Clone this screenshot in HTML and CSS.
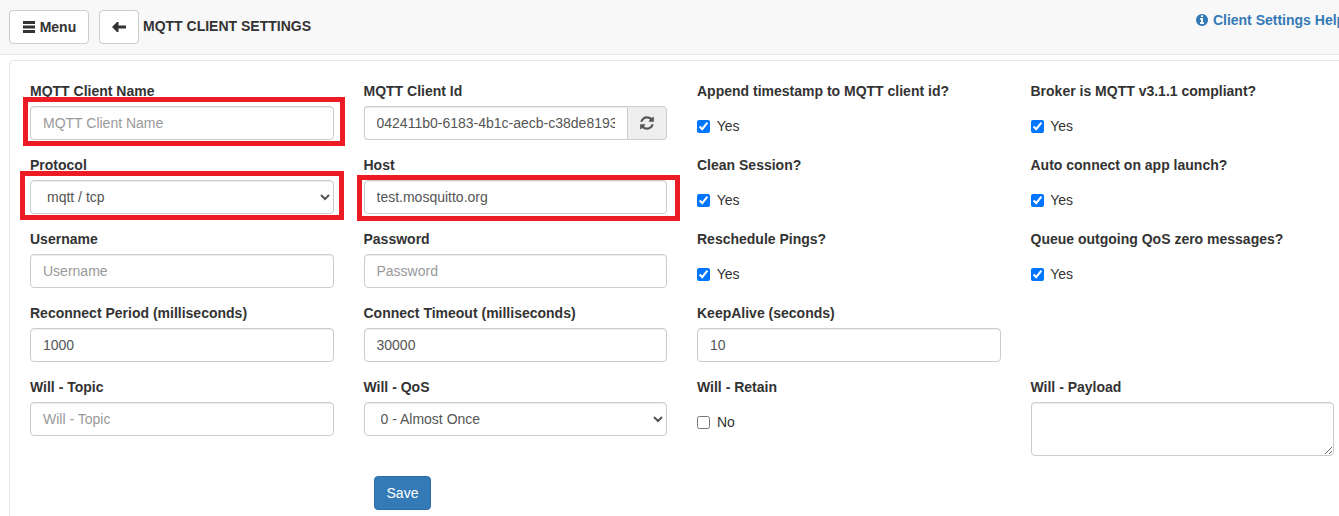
FILE: index.html
```html
<!DOCTYPE html>
<html>

<head>
  <meta charset="utf-8">
  <link rel="stylesheet" href="styles.css">
  <title>MQTT Client Settings</title>
</head>

<body>
  <div class="navbar">
    <button type="button" class="btn btn-menu">
      <svg class="icon" viewBox="0 0 14 14"><path d="M1 1h12v3h-12zM1 5.5h12v3h-12zM1 10h12v3h-12z"/></svg>
      Menu
    </button>
    <button type="button" class="btn btn-back">
      <svg class="icon" viewBox="0 0 14 10"><path d="M0 5l5-5h1.5v3.4h7.5v3.2h-7.5v3.4h-1.5z"/></svg>
    </button>
    <span class="page-title">MQTT CLIENT SETTINGS</span>
    <a class="help-link" href="#">
      <svg class="icon" viewBox="0 0 1792 1792"><path d="M1152 1376v-160q0-14-9-23t-23-9h-96v-512q0-14-9-23t-23-9h-320q-14 0-23 9t-9 23v160q0 14 9 23t23 9h96v320h-96q-14 0-23 9t-9 23v160q0 14 9 23t23 9h448q14 0 23-9t9-23zm-128-896v-160q0-14-9-23t-23-9h-192q-14 0-23 9t-9 23v160q0 14 9 23t23 9h192q14 0 23-9t9-23zm640 416q0 209-103 385.5t-279.5 279.5-385.5 103-385.5-103-279.5-279.5-103-385.5 103-385.5 279.5-279.5 385.5-103 385.5 103 279.5 279.5 103 385.5z"/></svg>
      Client Settings Help
    </a>
  </div>

  <div class="panel">
    <form class="settings">
      <div class="form-group marked marked-name">
        <label>MQTT Client Name</label>
        <input class="form-control" type="text" placeholder="MQTT Client Name">
      </div>
      <div class="form-group">
        <label>MQTT Client Id</label>
        <div class="input-group">
          <input class="form-control" type="text" value="042411b0-6183-4b1c-aecb-c38de8193a4f">
          <span class="addon">
            <svg class="icon" viewBox="0 0 1792 1792"><path d="M1639 1056q0 5-1 7-64 268-268 434.5t-478 166.5q-146 0-282.5-55t-243.5-157l-129 129q-19 19-45 19t-45-19-19-45v-448q0-26 19-45t45-19h448q26 0 45 19t19 45-19 45l-137 137q71 66 161 102t187 36q134 0 250-65t186-179q11-17 53-117 8-23 30-23h192q13 0 22.5 9.5t9.5 22.5zm25-800v448q0 26-19 45t-45 19h-448q-26 0-45-19t-19-45 19-45l138-138q-148-137-349-137-134 0-250 65t-186 179q-11 17-53 117-8 23-30 23h-199q-13 0-22.5-9.5t-9.5-22.5v-7q65-268 270-434.5t480-166.5q146 0 284 55.5t245 156.5l130-129q19-19 45-19t45 19 19 45z"/></svg>
          </span>
        </div>
      </div>
      <div class="form-group">
        <label>Append timestamp to MQTT client id?</label>
        <label class="check"><input type="checkbox" checked> Yes</label>
      </div>
      <div class="form-group">
        <label>Broker is MQTT v3.1.1 compliant?</label>
        <label class="check"><input type="checkbox" checked> Yes</label>
      </div>

      <div class="form-group marked marked-protocol">
        <label>Protocol</label>
        <select class="form-control">
          <option>mqtt / tcp</option>
        </select>
      </div>
      <div class="form-group marked marked-host">
        <label>Host</label>
        <input class="form-control" type="text" value="test.mosquitto.org">
      </div>
      <div class="form-group">
        <label>Clean Session?</label>
        <label class="check"><input type="checkbox" checked> Yes</label>
      </div>
      <div class="form-group">
        <label>Auto connect on app launch?</label>
        <label class="check"><input type="checkbox" checked> Yes</label>
      </div>

      <div class="form-group">
        <label>Username</label>
        <input class="form-control" type="text" placeholder="Username">
      </div>
      <div class="form-group">
        <label>Password</label>
        <input class="form-control" type="password" placeholder="Password">
      </div>
      <div class="form-group">
        <label>Reschedule Pings?</label>
        <label class="check"><input type="checkbox" checked> Yes</label>
      </div>
      <div class="form-group">
        <label>Queue outgoing QoS zero messages?</label>
        <label class="check"><input type="checkbox" checked> Yes</label>
      </div>

      <div class="form-group">
        <label>Reconnect Period (milliseconds)</label>
        <input class="form-control" type="text" value="1000">
      </div>
      <div class="form-group">
        <label>Connect Timeout (milliseconds)</label>
        <input class="form-control" type="text" value="30000">
      </div>
      <div class="form-group">
        <label>KeepAlive (seconds)</label>
        <input class="form-control" type="text" value="10">
      </div>
      <div class="form-group"></div>

      <div class="form-group">
        <label>Will - Topic</label>
        <input class="form-control" type="text" placeholder="Will - Topic">
      </div>
      <div class="form-group">
        <label>Will - QoS</label>
        <select class="form-control">
          <option>0 - Almost Once</option>
        </select>
      </div>
      <div class="form-group">
        <label>Will - Retain</label>
        <label class="check"><input type="checkbox"> No</label>
      </div>
      <div class="form-group">
        <label>Will - Payload</label>
        <textarea class="form-control" rows="2"></textarea>
      </div>
    </form>
    <button type="button" class="btn-save">Save</button>
  </div>
</body>

</html>
```

FILE: styles.css
```css
html,
body {
  margin: 0;
  height: 516px;
  overflow: hidden;
  background-color: #fff;
  color: #333;
  font-family: "Liberation Sans", Arial, sans-serif;
  font-size: 14px;
  line-height: 20px;
}

.icon {
  width: 1em;
  height: 1em;
  fill: currentColor;
  vertical-align: -2px;
}

.navbar {
  display: flex;
  align-items: flex-start;
  box-sizing: border-box;
  height: 55px;
  padding: 10px 0 0 9px;
  background-color: #f8f8f8;
  border-bottom: 1px solid #e7e7e7;
}

.btn {
  box-sizing: border-box;
  height: 34px;
  padding: 0;
  background-color: #fff;
  border: 1px solid #ccc;
  border-radius: 4px;
  color: #333;
  font: bold 14px/20px "Liberation Sans", Arial, sans-serif;
}

.btn-menu {
  width: 80px;
  margin-right: 10px;
}

.btn-back {
  width: 40px;
  margin-right: 4px;
}

.btn-back .icon {
  width: 14px;
  height: 10px;
  vertical-align: 0;
}

.page-title {
  margin-top: 6px;
  font-weight: bold;
}

.help-link {
  margin-left: auto;
  flex: none;
  width: 144px;
  white-space: nowrap;
  color: #337ab7;
  font-weight: bold;
  text-decoration: none;
}

.panel {
  box-sizing: border-box;
  width: 1400px;
  height: 480px;
  margin: 5px 0 0 9px;
  padding: 20px 0 0 20px;
  background-color: #fff;
  border: 1px solid #e7e7e7;
  border-radius: 4px;
}

.settings {
  display: grid;
  grid-template-columns: repeat(4, 303.5px);
  column-gap: 30px;
}

.form-group {
  position: relative;
  margin-bottom: 15px;
  min-height: 59px;
}

.form-group > label {
  display: block;
  margin-bottom: 5px;
  font-weight: bold;
}

.form-control {
  display: block;
  box-sizing: border-box;
  width: 100%;
  height: 34px;
  padding: 6px 12px;
  background-color: #fff;
  border: 1px solid #ccc;
  border-radius: 4px;
  box-shadow: inset 0 1px 1px rgba(0, 0, 0, .075);
  color: #555;
  font-family: "Liberation Sans", Arial, sans-serif;
  font-size: 14px;
  line-height: 20px;
}

.form-control::placeholder {
  color: #999;
}

textarea.form-control {
  height: 54px;
}

.input-group {
  display: flex;
}

.input-group .form-control {
  flex: 1;
  min-width: 0;
  border-right: 0;
  border-radius: 4px 0 0 4px;
}

.addon {
  box-sizing: border-box;
  display: flex;
  align-items: center;
  justify-content: center;
  flex: none;
  width: 40px;
  height: 34px;
  background-color: #eee;
  border: 1px solid #ccc;
  border-radius: 0 4px 4px 0;
  color: #555;
}

.addon .icon {
  width: 16px;
  height: 16px;
}

.form-group > label.check {
  display: block;
  margin: 15px 0 0;
  font-weight: normal;
}

.check input {
  width: 13px;
  height: 13px;
  margin: 0 3px 0 0;
  vertical-align: -2px;
}

/* red boxes drawn over the screenshot fields */
.marked::after {
  content: "";
  position: absolute;
  box-sizing: border-box;
  border: 5px solid #ed1c24;
  pointer-events: none;
}

.marked-name::after {
  left: -7px;
  top: 16px;
  width: 322px;
  height: 49px;
}

.marked-protocol::after {
  left: -10px;
  top: 16px;
  width: 324px;
  height: 49px;
}

.marked-host::after {
  left: -7px;
  top: 20px;
  width: 323px;
  height: 46px;
}

.btn-save {
  display: block;
  box-sizing: border-box;
  width: 57px;
  height: 34px;
  margin: 5px 0 0 344px;
  padding: 0;
  background-color: #337ab7;
  border: 1px solid #2e6da4;
  border-radius: 4px;
  color: #fff;
  font: 14px/20px "Liberation Sans", Arial, sans-serif;
}
```
